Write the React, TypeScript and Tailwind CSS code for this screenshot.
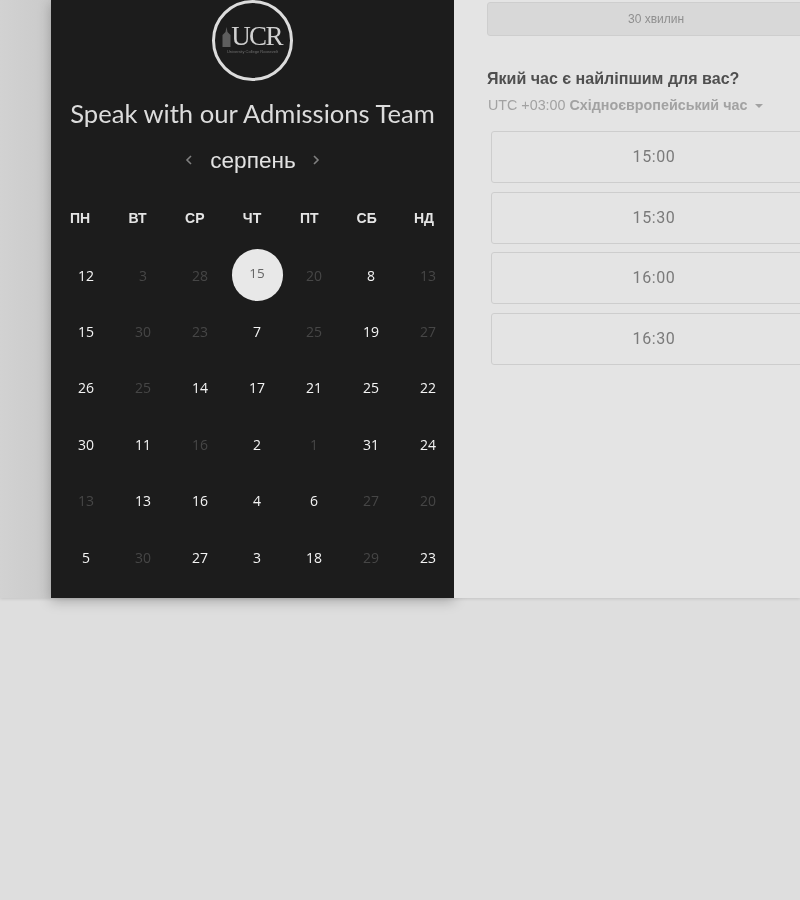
import React from "react";

const weekdays = ["ПН", "ВТ", "СР", "ЧТ", "ПТ", "СБ", "НД"];
type Cell = [number, boolean];
const rows: Cell[][] = [
  [[12, true], [3, false], [28, false], [15, true], [20, false], [8, true], [13, false]],
  [[15, true], [30, false], [23, false], [7, true], [25, false], [19, true], [27, false]],
  [[26, true], [25, false], [14, true], [17, true], [21, true], [25, true], [22, true]],
  [[30, true], [11, true], [16, false], [2, true], [1, false], [31, true], [24, true]],
  [[13, false], [13, true], [16, true], [4, true], [6, true], [27, false], [20, false]],
  [[5, true], [30, false], [27, true], [3, true], [18, true], [29, false], [23, true]],
];
const slots = ["15:00", "15:30", "16:00", "16:30"];

function Logo() {
  return (
    <div className="w-[81px] h-[81px] rounded-full border-[3px] border-[#dcdcdc] flex flex-col items-center justify-center">
      <div className="flex items-end h-[24px] mt-[-4px] ml-[-1px]">
        <svg width="9" height="20" viewBox="0 0 9 20" className="mb-[1px]">
          <path d="M4.5 0 L5.5 5 L8.5 8 L8.5 20 L0.5 20 L0.5 8 L3.5 5 Z" fill="#5e5e5e" />
        </svg>
        <span className="font-['Liberation_Serif',serif] text-[27px] leading-[24px] tracking-[-1.6px] text-[#d0d0d0]">UCR</span>
      </div>
      <span className="mt-[1px] font-['Liberation_Sans',sans-serif] text-[4px] leading-[5px] text-[#707070] whitespace-nowrap">University College Roosevelt</span>
    </div>
  );
}

export default function App() {
  return (
    <div className="w-[800px] h-[900px] overflow-hidden bg-[#dedede] font-['Liberation_Sans',sans-serif]">
      <div className="flex h-[598px] shadow-[0_1px_3px_rgba(0,0,0,0.12)]">
        <div className="w-[51px] shrink-0 bg-gradient-to-r from-[#d2d2d2] to-[#cacaca]" />
        <div className="w-[403px] shrink-0 bg-[#1c1c1c] shadow-[0_3px_12px_rgba(0,0,0,0.25)] z-10">
          <div className="flex flex-col items-center blur-[0.4px]">
            <Logo />
            <h1 className="mt-[14px] font-['Lato',sans-serif] font-normal text-[25.6px] leading-[36px] text-[#dcdcdc] whitespace-nowrap">
              Speak with our Admissions Team
            </h1>
            <div className="mt-[15px] flex items-center h-[30px] text-[#e2e2e2]">
              <svg width="8" height="12" viewBox="0 0 8 12" className="mr-[17px] mb-[3px]">
                <path d="M6 2 L2 6 L6 10" fill="none" stroke="#808080" strokeWidth="1.6" />
              </svg>
              <span className="text-[22.6px] leading-[30px]">серпень</span>
              <svg width="8" height="12" viewBox="0 0 8 12" className="ml-[16px] mb-[3px]">
                <path d="M2 2 L6 6 L2 10" fill="none" stroke="#808080" strokeWidth="1.6" />
              </svg>
            </div>
            <div className="mt-[34px] w-full pl-[0.5px] grid grid-cols-[repeat(7,57.3px)]">
              {weekdays.map((d) => (
                <div key={d} className="h-[37px] text-center text-[14px] leading-[16px] font-bold text-[#e4e4e4]">{d}</div>
              ))}
            </div>
            <div className="w-full pl-[6.5px] grid grid-cols-[repeat(7,57px)] auto-rows-[56.4px] font-['Open_Sans',sans-serif] text-[14px]">
              {rows.flat().map(([n, on], i) =>
                i === 3 ? (
                  <div key={i} className="flex items-center justify-center">
                    <div className="w-[51px] h-[52px] rounded-full bg-[#e8e8e8] text-[#666666] text-[13.5px] flex items-center justify-center pb-[4px]">{n}</div>
                  </div>
                ) : (
                  <div key={i} className={`flex items-center justify-center ${on ? "text-[#f4f4f4]" : "text-[#464646]"}`}>{n}</div>
                )
              )}
            </div>
          </div>
        </div>
        <div className="relative z-20 flex-1 min-w-0 overflow-hidden bg-[#e4e4e4] pl-[33px] pt-[2px]">
          <div className="blur-[0.4px]">
            <div className="w-[338px] h-[34px] rounded-[3px] border border-[#cecece] bg-[#d8d8d8] flex items-center justify-center text-[12px] text-[#8f8f8f]">
              <span>30 хвилин</span>
            </div>
            <h2 className="mt-[31px] text-[16.05px] leading-[22px] font-bold text-[#4f4f4f] whitespace-nowrap">Який час є найліпшим для вас?</h2>
            <div className="mt-[6px] ml-[1px] flex items-center text-[14.3px] leading-[20px] text-[#a2a2a2] whitespace-nowrap">
              <span>UTC +03:00&nbsp;</span>
              <span className="font-bold">Східноєвропейський час</span>
              <span className="ml-[8px] mt-[1px] w-0 h-0 border-x-[4px] border-x-transparent border-t-[4px] border-t-[#a2a2a2]" />
            </div>
            <div className="mt-[16px] ml-[4px] flex flex-col gap-[8.5px]">
              {slots.map((s) => (
                <div key={s} className="w-[326px] h-[52px] rounded-[3px] border border-[#cdcdcd] flex items-center justify-center font-['Roboto',sans-serif] text-[16px] tracking-[0.6px] text-[#7a7a7a]">
                  {s}
                </div>
              ))}
            </div>
          </div>
        </div>
      </div>
    </div>
  );
}
